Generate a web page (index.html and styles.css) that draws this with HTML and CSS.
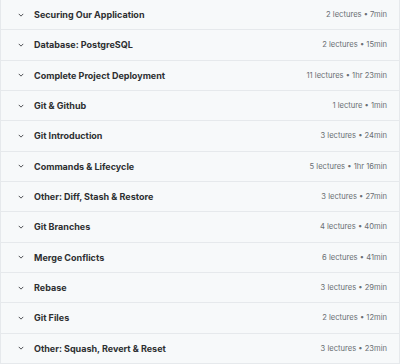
FILE: index.html
```html
<!DOCTYPE html>
<html lang="en">
<head>
    <meta charset="UTF-8">
    <meta name="viewport" content="width=device-width, initial-scale=1.0">
    <title>Course Content</title>
    <link rel="stylesheet" href="styles.css">
</head>
<body>
    <div class="curriculum">
        <div class="section">
            <svg class="chevron" viewBox="0 0 8 5"><path d="M1 1l3 3 3-3"/></svg>
            <span class="section-title">Securing Our Application</span>
            <span class="section-meta">2 lectures • 7min</span>
        </div>
        <div class="section">
            <svg class="chevron" viewBox="0 0 8 5"><path d="M1 1l3 3 3-3"/></svg>
            <span class="section-title">Database: PostgreSQL</span>
            <span class="section-meta">2 lectures • 15min</span>
        </div>
        <div class="section">
            <svg class="chevron" viewBox="0 0 8 5"><path d="M1 1l3 3 3-3"/></svg>
            <span class="section-title">Complete Project Deployment</span>
            <span class="section-meta">11 lectures • 1hr 23min</span>
        </div>
        <div class="section">
            <svg class="chevron" viewBox="0 0 8 5"><path d="M1 1l3 3 3-3"/></svg>
            <span class="section-title">Git &amp; Github</span>
            <span class="section-meta">1 lecture • 1min</span>
        </div>
        <div class="section">
            <svg class="chevron" viewBox="0 0 8 5"><path d="M1 1l3 3 3-3"/></svg>
            <span class="section-title">Git Introduction</span>
            <span class="section-meta">3 lectures • 24min</span>
        </div>
        <div class="section">
            <svg class="chevron" viewBox="0 0 8 5"><path d="M1 1l3 3 3-3"/></svg>
            <span class="section-title">Commands &amp; Lifecycle</span>
            <span class="section-meta">5 lectures • 1hr 16min</span>
        </div>
        <div class="section">
            <svg class="chevron" viewBox="0 0 8 5"><path d="M1 1l3 3 3-3"/></svg>
            <span class="section-title">Other: Diff, Stash &amp; Restore</span>
            <span class="section-meta">3 lectures • 27min</span>
        </div>
        <div class="section">
            <svg class="chevron" viewBox="0 0 8 5"><path d="M1 1l3 3 3-3"/></svg>
            <span class="section-title">Git Branches</span>
            <span class="section-meta">4 lectures • 40min</span>
        </div>
        <div class="section">
            <svg class="chevron" viewBox="0 0 8 5"><path d="M1 1l3 3 3-3"/></svg>
            <span class="section-title">Merge Conflicts</span>
            <span class="section-meta">6 lectures • 41min</span>
        </div>
        <div class="section">
            <svg class="chevron" viewBox="0 0 8 5"><path d="M1 1l3 3 3-3"/></svg>
            <span class="section-title">Rebase</span>
            <span class="section-meta">3 lectures • 29min</span>
        </div>
        <div class="section">
            <svg class="chevron" viewBox="0 0 8 5"><path d="M1 1l3 3 3-3"/></svg>
            <span class="section-title">Git Files</span>
            <span class="section-meta">2 lectures • 12min</span>
        </div>
        <div class="section">
            <svg class="chevron" viewBox="0 0 8 5"><path d="M1 1l3 3 3-3"/></svg>
            <span class="section-title">Other: Squash, Revert &amp; Reset</span>
            <span class="section-meta">3 lectures • 23min</span>
        </div>
    </div>
</body>
</html>
```

FILE: styles.css
```css
:root {
    --bg: #f7f9fa;
    --border: #e6e9ec;
    --title: #2d2f31;
    --meta: #6a6f73;
}

body {
    margin: 0;
    padding: 0;
    background-color: #ffffff;
    font-family: Inter, Roboto, "Liberation Sans", sans-serif;
}

.curriculum {
    height: 364px;
    display: grid;
    grid-template-rows: repeat(12, 1fr);
    background-color: var(--bg);
    border-left: 1px solid var(--border);
    border-right: 1px solid var(--border);
}

.section {
    display: flex;
    align-items: center;
    padding: 0 12px 0 16px;
    border-bottom: 1px solid var(--border);
}

.chevron {
    width: 6px;
    height: 4px;
    margin-left: 1px;
    margin-right: 10px;
    fill: none;
    stroke: #4a4d50;
    stroke-width: 1.3;
}

.section-title {
    flex: 1;
    font-size: 9px;
    font-weight: 700;
    color: var(--title);
}

.section-meta {
    font-size: 7.6px;
    color: var(--meta);
}
```
